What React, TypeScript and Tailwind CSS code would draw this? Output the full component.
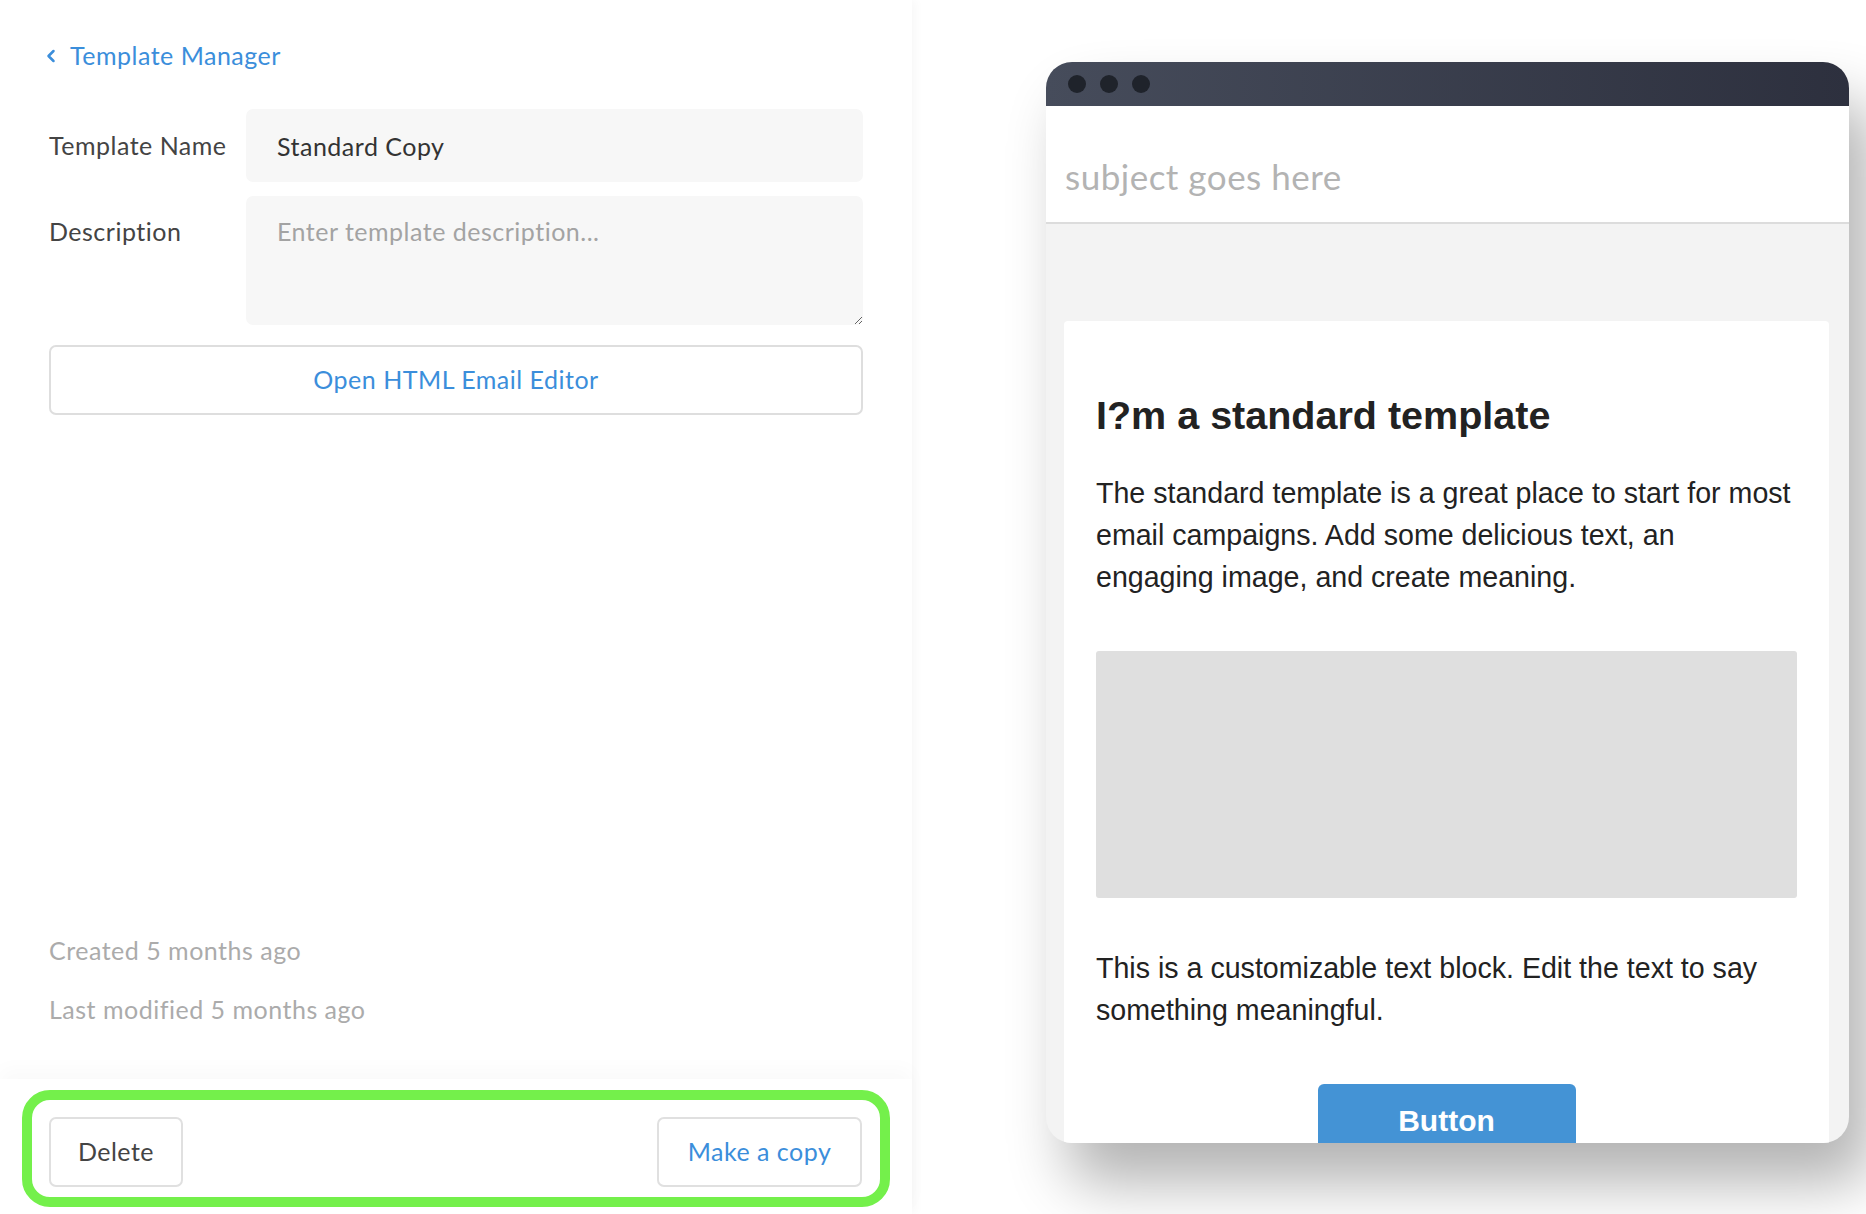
import { ChevronLeft } from 'lucide-react';

export default function App() {
  return (
    <main className="flex h-screen w-full overflow-hidden bg-white">
      {/* Settings panel */}
      <section
        className="relative z-10 flex w-[912px] shrink-0 flex-col bg-white shadow-[3px_0_10px_rgba(0,0,0,0.035)]"
        style={{ fontFamily: 'Lato, "Open Sans", sans-serif' }}
      >
        <div className="flex flex-1 flex-col px-[49px]">
          <a href="#" className="mt-[39px] flex h-[34px] items-center text-[25px] text-[#3b8edb]">
            <ChevronLeft className="-ml-[8px] mr-[9px] h-[20px] w-[20px]" strokeWidth={3} />
            <span className="tracking-[0.5px]">Template Manager</span>
          </a>

          <div className="mt-[36px] flex items-center">
            <label className="w-[197px] text-[25px] tracking-[0.5px] text-[#444]">Template Name</label>
            <input
              defaultValue="Standard Copy"
              className="h-[73px] flex-1 rounded-[7px] bg-[#f7f7f7] px-[31px] text-[25px] tracking-[0.5px] text-[#333] outline-none"
            />
          </div>

          <div className="mt-[14px] flex items-start">
            <label className="w-[197px] pt-[18px] text-[25px] leading-[34px] tracking-[0.5px] text-[#444]">
              Description
            </label>
            <textarea
              placeholder="Enter template description..."
              className="h-[129px] flex-1 rounded-[7px] bg-[#f7f7f7] px-[31px] pt-[18px] text-[25px] leading-[34px] tracking-[0.5px] text-[#333] outline-none placeholder:text-[#a3a3a3]"
            />
          </div>

          <button className="mt-[20px] h-[70px] w-full rounded-[7px] border-2 border-[#dedede] bg-white text-[25px] tracking-[0.5px] text-[#3b8edb]">
            Open HTML Email Editor
          </button>

          <div className="flex-1" />

          <div className="mb-[53px] flex flex-col gap-[25px] text-[25px] leading-[34px] tracking-[0.5px] text-[#ababab]">
            <span>Created 5 months ago</span>
            <span>Last modified 5 months ago</span>
          </div>
        </div>

        {/* Footer actions */}
        <div className="h-[135px] bg-white px-[22px] pt-[11px] shadow-[0_-10px_18px_rgba(0,0,0,0.025)]">
          <div className="flex h-[117px] items-start justify-between rounded-[28px] border-[10px] border-[#74f04b] pl-[17px] pr-[18px] pt-[17px]">
            <button className="h-[70px] w-[134px] rounded-[7px] border-2 border-[#e0e0e0] bg-white text-[25px] tracking-[0.5px] text-[#444]">
              Delete
            </button>
            <button className="h-[70px] w-[205px] rounded-[7px] border-2 border-[#e0e0e0] bg-white text-[25px] tracking-[0.5px] text-[#3b8edb]">
              Make a copy
            </button>
          </div>
        </div>
      </section>

      {/* Preview */}
      <section className="flex-1 pl-[134px] pt-[62px]">
        <div className="flex h-[1081px] w-[803px] flex-col overflow-hidden rounded-[26px] bg-[#f3f3f3] shadow-[22px_40px_60px_rgba(0,0,0,0.3)]">
          <div className="flex h-[44px] shrink-0 items-center gap-[14px] bg-gradient-to-r from-[#464c5b] to-[#2d303e] pl-[22px]">
            <span className="h-[18px] w-[18px] rounded-full bg-[#1f232b]" />
            <span className="h-[18px] w-[18px] rounded-full bg-[#1f232b]" />
            <span className="h-[18px] w-[18px] rounded-full bg-[#1f232b]" />
          </div>

          <div className="h-[118px] shrink-0 border-b-2 border-[#dcdcdc] bg-white pl-[19px] pt-[50px]">
            <p
              className="text-[35px] leading-[40px] tracking-[0.5px] text-[#b3b3b3]"
              style={{ fontFamily: 'Lato, "Open Sans", sans-serif' }}
            >
              subject goes here
            </p>
          </div>

          <div className="flex-1 pl-[18px] pr-[20px] pt-[97px]">
            <div
              className="rounded-[4px] bg-white px-[32px] pt-[70px]"
              style={{ fontFamily: '"Liberation Sans", Arial, sans-serif' }}
            >
              <h1 className="text-[39.5px] font-bold leading-[48px] text-[#222]">I?m a standard template</h1>
              <p className="mt-[33px] text-[28.6px] leading-[42px] text-[#222]">
                The standard template is a great place to start for most email campaigns. Add some delicious text, an engaging image, and create meaning.
              </p>
              <div className="mt-[53px] h-[247px] rounded-[3px] bg-[#dfdfdf]" />
              <p className="mt-[49px] text-[28.6px] leading-[42px] text-[#222]">
                This is a customizable text block. Edit the text to say something meaningful.
              </p>
              <div className="mt-[53px] flex justify-center">
                <div className="flex h-[72px] w-[258px] items-center justify-center rounded-[6px] bg-[#4493d5] text-[30px] font-bold text-white">
                  Button
                </div>
              </div>
            </div>
          </div>
        </div>
      </section>
    </main>
  );
}
